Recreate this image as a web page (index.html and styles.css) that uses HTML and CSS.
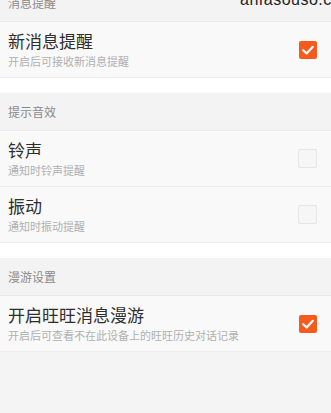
FILE: index.html
```html
<!DOCTYPE html>
<html lang="zh-CN">
<head>
  <meta charset="UTF-8">
  <meta name="viewport" content="width=device-width, initial-scale=1.0">
  <title>消息设置</title>
  <link rel="stylesheet" href="styles.css">
</head>
<body>

  <div class="watermark">anfasouso.com</div>

  <div class="page">
    <!-- 消息提醒 -->
    <div class="section-title first">消息提醒</div>
    <div class="row">
      <div class="text">
        <div class="title">新消息提醒</div>
        <div class="desc">开启后可接收新消息提醒</div>
      </div>
      <span class="check on">
        <svg viewBox="0 0 18 18" width="18" height="18"><polyline points="4.2,9.2 7.6,12.4 13.8,5.8" fill="none" stroke="#fff" stroke-width="2.2" stroke-linecap="round" stroke-linejoin="round"/></svg>
      </span>
    </div>

    <div class="spacer"></div>

    <!-- 提示音效 -->
    <div class="section-title">提示音效</div>
    <div class="row">
      <div class="text">
        <div class="title">铃声</div>
        <div class="desc">通知时铃声提醒</div>
      </div>
      <span class="check"></span>
    </div>
    <div class="row">
      <div class="text">
        <div class="title">振动</div>
        <div class="desc">通知时振动提醒</div>
      </div>
      <span class="check"></span>
    </div>

    <div class="spacer"></div>

    <!-- 漫游设置 -->
    <div class="section-title">漫游设置</div>
    <div class="row">
      <div class="text">
        <div class="title">开启旺旺消息漫游</div>
        <div class="desc">开启后可查看不在此设备上的旺旺历史对话记录</div>
      </div>
      <span class="check on">
        <svg viewBox="0 0 18 18" width="18" height="18"><polyline points="4.2,9.2 7.6,12.4 13.8,5.8" fill="none" stroke="#fff" stroke-width="2.2" stroke-linecap="round" stroke-linejoin="round"/></svg>
      </span>
    </div>
  </div>

</body>
</html>
```

FILE: styles.css
```css
html, body {
  height: 100%;
}
body {
  margin: 0;
  padding: 0;
  background-color: #f4f4f4;
  font-family: "Noto Sans CJK SC", "Noto Sans", sans-serif;
  overflow: hidden;
}
.page {
  display: flex;
  flex-direction: column;
}
.watermark {
  position: absolute;
  top: -9px;
  left: 240px;
  white-space: nowrap;
  font-family: "Liberation Sans", Arial, sans-serif;
  font-size: 16px;
  color: #222;
  letter-spacing: 0.5px;
  z-index: 2;
}
.section-title {
  height: 37px;
  line-height: 37px;
  padding-left: 8px;
  font-size: 12px;
  color: #8a8a8a;
  background-color: #f3f3f3;
  border-bottom: 1px solid #eaeaea;
}
.section-title.first {
  margin-top: -16px;
}
.row {
  height: 55px;
  display: flex;
  align-items: center;
  justify-content: space-between;
  padding: 0 14px 0 8px;
  background-color: #f9f9f9;
  border-bottom: 1px solid #ededed;
}
.title {
  font-size: 17px;
  line-height: 20px;
  color: #2e2e2e;
}
.desc {
  margin-top: 3px;
  font-size: 11px;
  line-height: 14px;
  color: #b0b0b0;
}
.spacer {
  height: 15px;
  background-color: #fff;
}
.check {
  width: 19px;
  height: 19px;
  box-sizing: border-box;
  border-radius: 2px;
  border: 1px solid #e6e6e6;
  background-color: #f6f6f6;
  display: flex;
  align-items: center;
  justify-content: center;
}
.check.on {
  width: 18px;
  height: 18px;
  border: none;
  background-color: #f65a1d;
}
```
